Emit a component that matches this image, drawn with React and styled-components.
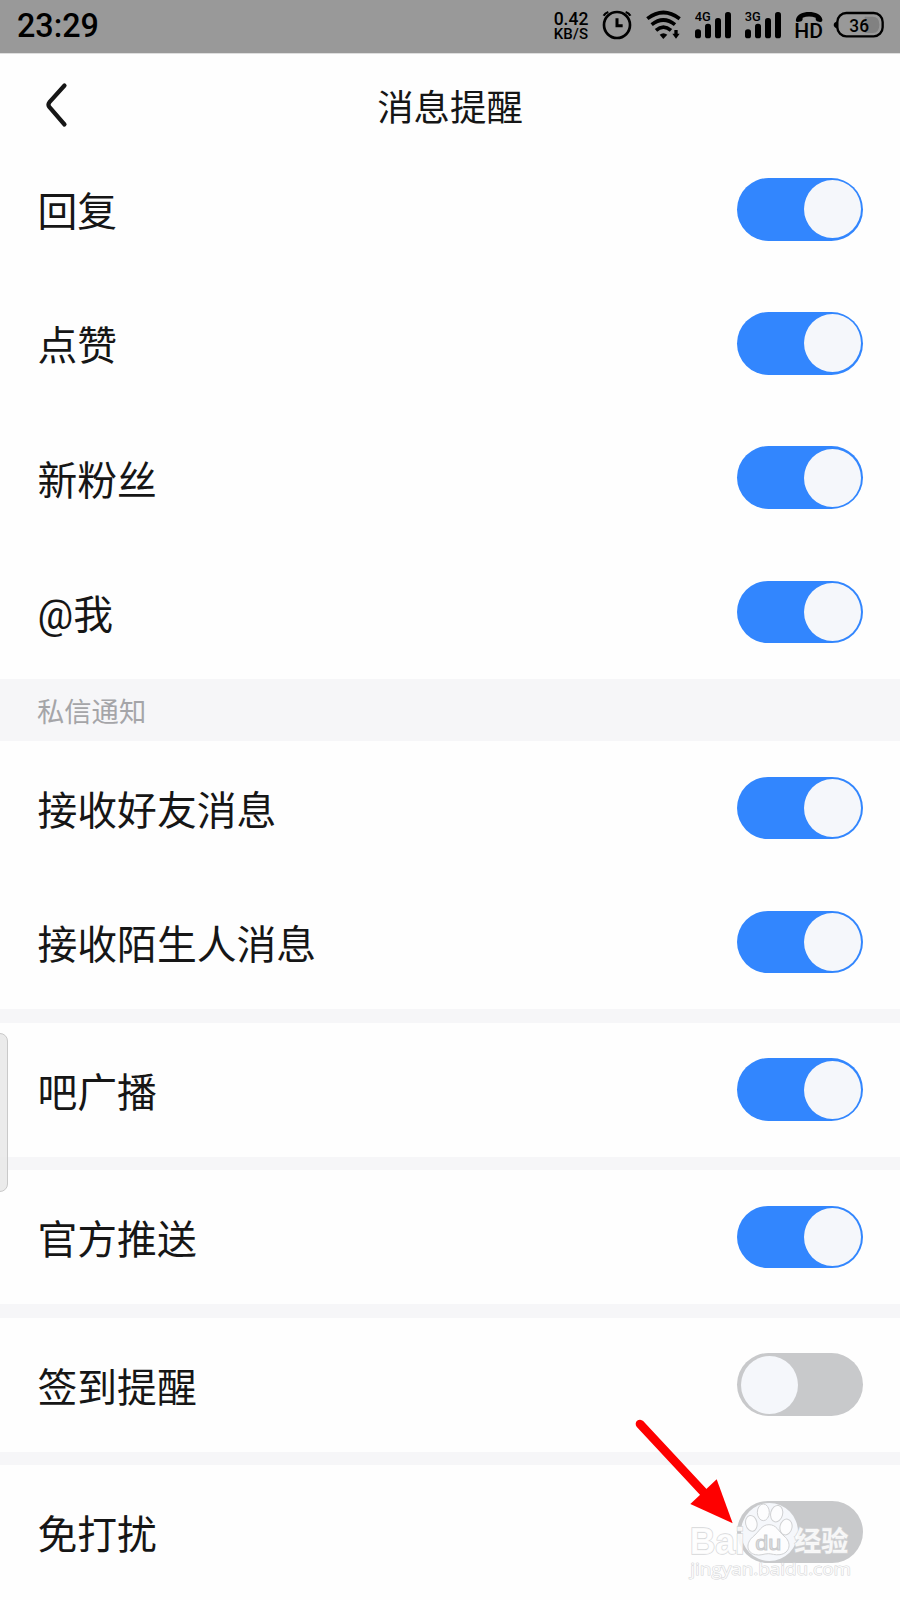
import { useState } from "react";
import styled, { createGlobalStyle } from "styled-components";

const groups = [
  { rows: [["回复", true], ["点赞", true], ["新粉丝", true], ["@我", true]] },
  {
    title: "私信通知",
    rows: [["接收好友消息", true], ["接收陌生人消息", true]],
  },
  { gap: true, rows: [["吧广播", true]] },
  { gap: true, rows: [["官方推送", true]] },
  { gap: true, rows: [["签到提醒", false]] },
  { gap: true, rows: [["免打扰", false]] },
];

const Signal = ({ label }) => (
  <StatusIcon width="36" viewBox="0 0 108 159">
    <text x="-1" y="64" fontSize="39" fontWeight="500" textLength="48" lengthAdjust="spacingAndGlyphs">
      {label}
    </text>
    <rect x="0" y="88" width="18" height="27" rx="8" />
    <rect x="30" y="71" width="18" height="44" rx="8" />
    <rect x="60" y="54" width="18" height="61" rx="8" />
    <rect x="90" y="36" width="18" height="79" rx="8" />
  </StatusIcon>
);

const StatusIcons = () => (
  <Icons>
    <Speed>
      <SpeedValue>0.42</SpeedValue>
      <SpeedUnit>KB/S</SpeedUnit>
    </Speed>
    <StatusIcon width="30" viewBox="185 0 90 159">
      <g fill="none" stroke="#000" strokeWidth="8">
        <circle cx="230" cy="75" r="39" />
        <path d="M230 55V77H247" strokeWidth="9" />
        <path d="M190 47Q194 39 204 36M256 36Q266 39 270 47" strokeWidth="7" />
      </g>
    </StatusIcon>
    <StatusIcon width="35" viewBox="315 0 105 159">
      <g fill="none" stroke="#000" strokeWidth="11">
        <path d="M319 56Q367 19 416 56" />
        <path d="M332 74Q367 46 402 74" />
        <path d="M345 91Q367 72 390 91" />
      </g>
      <path d="M356 104Q367 95 379 104L367 117Z" />
      <path d="M400 90H410V101H416L405 116L394 101H400Z" />
    </StatusIcon>
    <Signal label="4G" />
    <Signal label="3G" />
    <StatusIcon width="28" viewBox="226 0 84 159">
      <path d="M229 58C233 42 249 36 268 36S304 42 308 58Q309 67 301 66L292 64Q287 62 288 53Q268 46 249 53Q250 62 245 64L235 66Q227 67 229 58Z" />
      <text x="224" y="114" fontSize="61" fontWeight="500" textLength="86" lengthAdjust="spacingAndGlyphs">
        HD
      </text>
    </StatusIcon>
    <StatusIcon width="51" viewBox="339 0 153 159">
      <path d="M434 50H458Q478 50 478 74T458 99H434Z" fill="#818181" />
      <rect x="352" y="39" width="136" height="70" rx="27" fill="none" stroke="#000" strokeWidth="7" />
      <path d="M352 64Q341 68 341 75T352 86Z" />
      <text x="388" y="95" fontSize="54" fontWeight="500" textLength="59" lengthAdjust="spacingAndGlyphs">
        36
      </text>
    </StatusIcon>
  </Icons>
);

const Row = ({ label, initial }) => {
  const [on, setOn] = useState(initial);
  return (
    <RowWrapper>
      <Label>{label}</Label>
      <Switch role="switch" aria-checked={on} $on={on} onClick={() => setOn(!on)}>
        <Knob />
      </Switch>
    </RowWrapper>
  );
};

const Watermark = () => (
  <Overlay viewBox="0 0 840 600">
    <path d="M60 72L250 276" stroke="#fe0000" strokeWidth="26" strokeLinecap="round" />
    <path d="M290 238L338 370L211 312Z" fill="#fe0000" />
    <g fill="#fff" fillOpacity="0.75" stroke="#d0d1d3" strokeWidth="3">
      <ellipse cx="394" cy="370" rx="17" ry="24" transform="rotate(-12 394 370)" />
      <ellipse cx="430" cy="337" rx="18" ry="25" />
      <ellipse cx="470" cy="341" rx="18" ry="25" transform="rotate(14 470 341)" />
      <ellipse cx="498" cy="381" rx="18" ry="24" transform="rotate(12 498 381)" />
      <path d="M447 374C470 374 474 393 492 408C516 427 511 459 480 464C465 466 455 461 445 461C432 461 420 468 406 464C379 458 377 430 398 411C418 395 424 374 447 374Z" />
    </g>
    <g fontFamily="'Liberation Sans', sans-serif" fill="#fff" fillOpacity="0.85" stroke="#d6d7d9" strokeWidth="4" paintOrder="stroke">
      <text x="209" y="461" fontSize="112" fontWeight="700" textLength="166" lengthAdjust="spacingAndGlyphs">
        Bai
      </text>
      <text x="523" y="453" fontSize="81" fontWeight="700" fontFamily="'Noto Sans CJK SC', sans-serif">
        经验
      </text>
      <text x="211" y="524" fontSize="50" strokeWidth="3" fontFamily="'Open Sans', sans-serif" textLength="482" lengthAdjust="spacingAndGlyphs">
        jingyan.baidu.com
      </text>
    </g>
    <text
      x="406"
      y="449"
      fontFamily="'Liberation Sans', sans-serif"
      fontSize="63"
      fill="#e2e3e5"
      stroke="#cacbcd"
      strokeWidth="3"
      textLength="78"
      lengthAdjust="spacingAndGlyphs"
    >
      du
    </text>
  </Overlay>
);

const App = () => (
  <Page>
    <GlobalStyle />
    <StatusBar>
      <Time>23:29</Time>
      <StatusIcons />
    </StatusBar>
    <Header>
      <Back aria-label="返回">
        <svg width="24" height="50" viewBox="0 0 24 50">
          <path
            d="M20.5 5.5L5.3 22.4Q3.6 24.7 5.3 27L20.5 44.5"
            fill="none"
            stroke="#161616"
            strokeWidth="4.2"
            strokeLinecap="round"
          />
        </svg>
      </Back>
      <Title>消息提醒</Title>
    </Header>
    {groups.map((group) => (
      <section key={group.rows[0][0]}>
        {group.title && <GroupTitle>{group.title}</GroupTitle>}
        {group.gap && <Divider />}
        {group.rows.map(([label, on]) => (
          <Row key={label} label={label} initial={on} />
        ))}
      </section>
    ))}
    <EdgeHandle />
    <Watermark />
  </Page>
);

const GlobalStyle = createGlobalStyle`
  * {
    box-sizing: border-box;
  }
  body {
    margin: 0;
    background: #fefefe;
  }
`;

const Page = styled.main`
  position: relative;
  width: 900px;
  height: 1600px;
  overflow: hidden;
  background: #fefefe;
  color: #161616;
  font-family: Roboto, "Noto Sans CJK SC", sans-serif;
`;

const StatusBar = styled.div`
  display: flex;
  justify-content: space-between;
  height: 53px;
  padding: 0 16px 0 17px;
  background: #999;
  color: #000;
`;

const Time = styled.span`
  font-size: 32.3px;
  font-weight: 500;
  line-height: 52px;
`;

const Icons = styled.div`
  display: flex;
  gap: 14.2px;
`;

const StatusIcon = styled.svg`
  height: 53px;
  flex: none;

  &:last-child {
    margin-left: -4.5px;
  }
`;

const Speed = styled.div`
  display: flex;
  flex-direction: column;
  margin-right: -1px;
  padding-top: 10.6px;
  font-weight: 500;
`;

const SpeedValue = styled.span`
  font-size: 17.5px;
  line-height: 17px;
`;

const SpeedUnit = styled.span`
  font-size: 15px;
  line-height: 13px;
  letter-spacing: 0.2px;
`;

const Header = styled.header`
  display: grid;
  grid-template-columns: 160px 1fr 160px;
  align-items: center;
  height: 89.2px;
  border-top: 1px solid #dedede;
`;

const Back = styled.button`
  display: flex;
  align-items: center;
  height: 88px;
  padding: 14px 0 0 44px;
  border: 0;
  background: none;
`;

const Title = styled.h1`
  margin: 13px 0 0;
  font-family: "Noto Sans CJK SC", sans-serif;
  font-size: 36.4px;
  font-weight: 400;
  text-align: center;
`;

const GroupTitle = styled.h2`
  display: flex;
  align-items: center;
  height: 62px;
  margin: 0;
  padding: 0 37px;
  background: #f6f6f8;
  color: #a5a5a8;
  font-family: "Noto Sans CJK SC", sans-serif;
  font-size: 27.3px;
  font-weight: 400;
`;

const Divider = styled.div`
  height: 13.3px;
  background: #f6f6f8;
`;

const RowWrapper = styled.div`
  display: flex;
  align-items: center;
  justify-content: space-between;
  height: 134.2px;
  padding: 0 37.5px;
`;

const Label = styled.span`
  padding-top: 8px;
  font-size: 39.8px;
  line-height: 60px;
`;

const Switch = styled.button`
  display: flex;
  align-items: center;
  justify-content: ${({ $on }) => ($on ? "flex-end" : "flex-start")};
  width: 125.5px;
  height: 62.5px;
  padding: 0 2px 0 3.5px;
  border: 0;
  border-radius: 32px;
  background: ${({ $on }) => ($on ? "#3286fe" : "#c8c9cb")};
`;

const Knob = styled.span`
  width: 57px;
  height: 58px;
  border-radius: 50%;
  background: #f5f7fb;
`;

// drawer grip that floats over the list
const EdgeHandle = styled.div`
  position: absolute;
  left: -2px;
  top: 1033px;
  width: 10px;
  height: 159px;
  border: 1px solid #c9c9c9;
  border-radius: 0 8px 8px 0;
  background: rgba(232, 232, 232, 0.85);
`;

const Overlay = styled.svg`
  position: absolute;
  left: 620px;
  top: 1400px;
  width: 280px;
  height: 200px;
  pointer-events: none;
`;

export default App;
